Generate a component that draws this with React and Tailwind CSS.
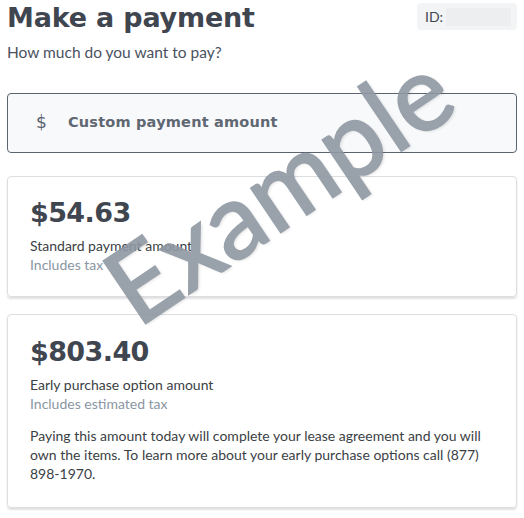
export default function App() {
  return (
    <div className="relative w-[524px] h-[518px] overflow-hidden bg-white px-[7px]" style={{ fontFamily: "Lato, 'Open Sans', sans-serif" }}>
      <div className="flex items-start justify-between pt-[1px]">
        <h1 className="text-[27px] leading-[34px] font-bold text-[#3f4650] tracking-[-0.2px]" style={{ fontFamily: "'DejaVu Sans', sans-serif" }}>Make a payment</h1>
        <div className="mt-[2px] flex items-center h-[27px] w-[100px] rounded-[4px] bg-[#f3f4f6] pl-[8px] pr-[6px]">
          <span className="text-[14px] text-[#3f4650]">ID:</span>
          <div className="ml-[3px] h-[18px] flex-1 bg-[#eceef0]"></div>
        </div>
      </div>
      <p className="mt-[7px] text-[15.5px] leading-[20px] text-[#4a5260]">How much do you want to pay?</p>
      <button className="mt-[31px] flex h-[60px] w-full items-center rounded-[4px] border border-[#5b6470] bg-[#f8f9fb] pl-[28px] text-left">
        <span className="text-[17px] text-[#5a6270] w-[32px]" style={{ fontFamily: "'DejaVu Sans', sans-serif" }}>$</span>
        <span className="text-[14.5px] font-semibold text-[#5f6772] tracking-[0.2px]" style={{ fontFamily: "'DejaVu Sans', sans-serif" }}>Custom payment amount</span>
      </button>
      <div className="mt-[23px] rounded-[4px] border border-[#dcdee2] shadow-[0_2px_2px_rgba(0,0,0,0.12)] px-[22px] pt-[21px] pb-[22px]">
        <div className="text-[27px] leading-[30px] font-bold text-[#3f4650] tracking-[-0.6px]" style={{ fontFamily: "'DejaVu Sans', sans-serif" }}>$54.63</div>
        <div className="mt-[8px] text-[14px] leading-[19px] text-[#3b3f45]">Standard payment amount</div>
        <div className="text-[14px] leading-[19px] text-[#8a96a3]">Includes tax</div>
      </div>
      <div className="mt-[17px] rounded-[4px] border border-[#dcdee2] shadow-[0_2px_2px_rgba(0,0,0,0.12)] px-[22px] pt-[22px] pb-[24px]">
        <div className="text-[27px] leading-[30px] font-bold text-[#3f4650] tracking-[-0.6px]" style={{ fontFamily: "'DejaVu Sans', sans-serif" }}>$803.40</div>
        <div className="mt-[8px] text-[14px] leading-[19px] text-[#3b3f45]">Early purchase option amount</div>
        <div className="text-[14px] leading-[19px] text-[#8a96a3]">Includes estimated tax</div>
        <p className="mt-[13px] text-[14px] leading-[19px] text-[#3b3f45]">Paying this amount today will complete your lease agreement and you will own the items. To learn more about your early purchase options call (877) 898-1970.</p>
      </div>
      <div className="pointer-events-none absolute left-[277px] top-[186px] -translate-x-1/2 -translate-y-1/2 -rotate-[34deg] whitespace-nowrap text-[105px] leading-none font-normal text-[#8f98a3] opacity-90 [-webkit-text-stroke:2px_#8f98a3]" style={{ fontFamily: "Lato, sans-serif", textShadow: "1px 2px 3px rgba(0,0,0,0.15)" }}>Example</div>
    </div>
  );
}
